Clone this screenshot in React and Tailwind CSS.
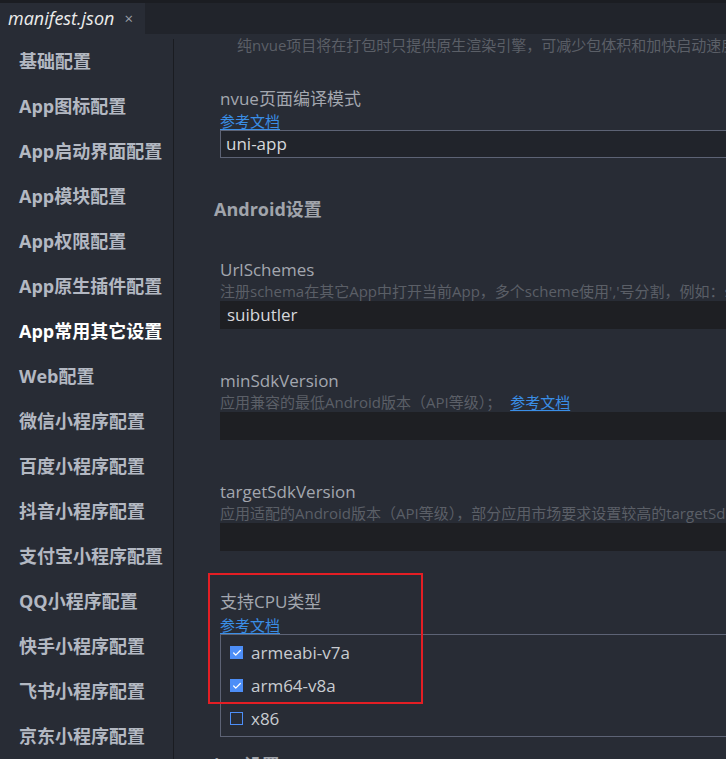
import { Check } from 'lucide-react';

const font = { fontFamily: '"Open Sans", "Noto Sans CJK SC", sans-serif' };

const menu = [
  '基础配置',
  'App图标配置',
  'App启动界面配置',
  'App模块配置',
  'App权限配置',
  'App原生插件配置',
  'App常用其它设置',
  'Web配置',
  '微信小程序配置',
  '百度小程序配置',
  '抖音小程序配置',
  '支付宝小程序配置',
  'QQ小程序配置',
  '快手小程序配置',
  '飞书小程序配置',
  '京东小程序配置',
];

const cpus = [
  { name: 'armeabi-v7a', checked: true },
  { name: 'arm64-v8a', checked: true },
  { name: 'x86', checked: false },
];

function DocLink({ className = '' }) {
  return (
    <div className={`h-[18px] text-[15px] leading-[18px] ${className}`}>
      <a className="text-[#3a8ee6] underline underline-offset-2 cursor-pointer">参考文档</a>
    </div>
  );
}

function Label({ children, className = '' }) {
  return <div className={`text-[17px] leading-[22px] text-[#a3a7af] ${className}`}>{children}</div>;
}

function Desc({ children }) {
  return <div className="h-[20px] text-[15px] leading-[20px] text-[#5b5f67] whitespace-nowrap">{children}</div>;
}

function Field({ value, bordered }) {
  return (
    <div className={`h-[28px] w-full flex items-center text-[17px] text-[#d6d8dc] ${
      bordered ? 'border border-[#5d6375] bg-[#21242b] pl-[5px]' : 'bg-[#1e1f23] pl-[7px]'
    }`}>
      {value}
    </div>
  );
}

export default function App() {
  return (
    <div className="w-[726px] h-[759px] overflow-hidden bg-[#282c35] flex flex-col" style={font}>
      <div className="h-[34px] shrink-0 border-t-[3px] border-[#1b1d22] bg-[#21242b] flex">
        <div className="w-[145px] bg-[#282c35] flex items-center pl-[8px] gap-[10px]">
          <span className="italic text-[18px] text-[#ececec]">manifest.json</span>
          <span className="text-[15px] text-[#9a9ea6]">×</span>
        </div>
      </div>

      <div className="flex flex-1 min-h-0">
        <div className="w-[174px] shrink-0 pt-[5px] flex flex-col">
          <div className="flex-1 border-r border-[#1a1c21] flex flex-col">
            {menu.map((m) => (
              <div
                key={m}
                className={`h-[45px] shrink-0 flex items-center pl-[19px] text-[18px] font-bold whitespace-nowrap ${
                  m === 'App常用其它设置' ? 'text-white' : 'text-[#b3b8c2]'
                }`}
              >
                {m}
              </div>
            ))}
          </div>
        </div>

        <div className="flex-1 overflow-hidden">
          <div className="w-[620px] pl-[46px] flex flex-col">
            <div className="ml-[17px] mt-[1px]">
              <Desc>纯nvue项目将在打包时只提供原生渲染引擎，可减少包体积和加快启动速度</Desc>
            </div>

            <Label className="mt-[33px]">nvue页面编译模式</Label>
            <DocLink className="mt-[2px]" />
            <Field value="uni-app" bordered />

            <div className="mt-[39px] -ml-[6px] text-[18px] leading-[24px] font-bold text-[#a0a4ab]">Android设置</div>

            <Label className="mt-[38px]">UrlSchemes</Label>
            <Desc>注册schema在其它App中打开当前App，多个scheme使用','号分割，例如：scheme1,scheme2</Desc>
            <Field value="suibutler" />

            <Label className="mt-[41px]">minSdkVersion</Label>
            <Desc>
              应用兼容的最低Android版本（API等级）；
              <a className="ml-[9px] text-[#3a8ee6] underline underline-offset-2">参考文档</a>
            </Desc>
            <Field value="" />

            <Label className="mt-[41px]">targetSdkVersion</Label>
            <Desc>应用适配的Android版本（API等级），部分应用市场要求设置较高的targetSdkVersion</Desc>
            <Field value="" />

            <div className="relative mt-[40px]">
              <div className="absolute -top-[18px] -left-[12px] w-[215px] h-[131px] border-2 border-[#e31e24] pointer-events-none z-10" />
              <Label>支持CPU类型</Label>
              <DocLink className="mt-[3px]" />
              <div className="border border-[#5d6375] pt-[1px] pb-[1px]">
                {cpus.map((c) => (
                  <div key={c.name} className="h-[33px] flex items-center pl-[9px] gap-[8px]">
                    {c.checked ? (
                      <span className="w-[13px] h-[13px] bg-[#4d8ef7] flex items-center justify-center">
                        <Check className="w-[10px] h-[10px] text-white" strokeWidth={3} />
                      </span>
                    ) : (
                      <span className="w-[13px] h-[13px] border border-[#4d8ef7]" />
                    )}
                    <span className="text-[17px] text-[#c9ccd1]">{c.name}</span>
                  </div>
                ))}
              </div>
            </div>

            <div className="mt-[16px] -ml-[6px] text-[18px] leading-[24px] font-bold text-[#a0a4ab]">iOS设置</div>
          </div>
        </div>
      </div>
    </div>
  );
}
